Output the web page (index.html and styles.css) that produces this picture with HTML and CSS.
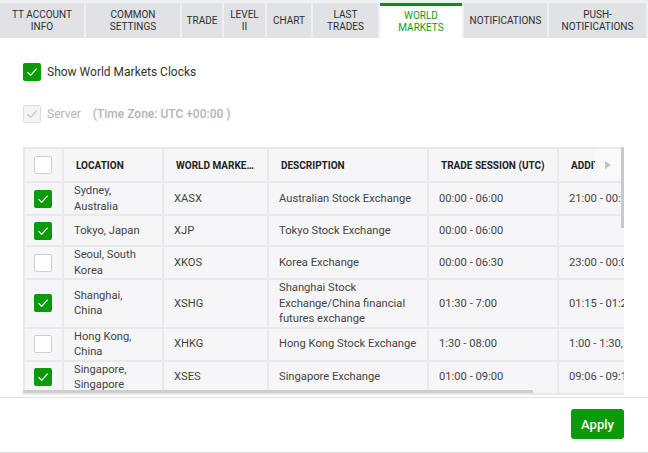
FILE: index.html
```html
<html>
    <head>
        <meta charset="UTF-8">
        <link rel="stylesheet" href="styles.css">
    </head>
    <body>
        <div class="tabs">
            <div class="tab tab-account">TT ACCOUNT<br>INFO</div>
            <div class="tab tab-common">COMMON<br>SETTINGS</div>
            <div class="tab tab-trade">TRADE</div>
            <div class="tab tab-level">LEVEL<br>II</div>
            <div class="tab tab-chart">CHART</div>
            <div class="tab tab-last">LAST<br>TRADES</div>
            <div class="tab tab-world active">WORLD<br>MARKETS</div>
            <div class="tab tab-notif">NOTIFICATIONS</div>
            <div class="tab tab-push">PUSH-<br>NOTIFICATIONS</div>
        </div>

        <div class="content">
            <div class="check-row">
                <span class="box on">
                    <svg width="18" height="18" viewBox="0 0 18 18"><path d="M4.5 9.2 L7.7 12.4 L13.6 5.6" fill="none" stroke="#fff" stroke-width="1.3"/></svg>
                </span>
                Show World Markets Clocks
            </div>

            <div class="check-row disabled">
                <span class="box dim">
                    <svg width="18" height="18" viewBox="0 0 18 18"><path d="M4.5 9.2 L7.7 12.4 L13.6 5.6" fill="none" stroke="#c4c4c4" stroke-width="1.3"/></svg>
                </span>
                Server <span class="tz">(Time Zone: UTC +00:00 )</span>
            </div>

            <div class="grid-wrap">
                <table class="grid">
                    <colgroup>
                        <col class="c-check"><col class="c-loc"><col class="c-mkt"><col class="c-desc"><col class="c-sess"><col class="c-add">
                    </colgroup>
                    <tr>
                        <th><span class="cb"></span></th>
                        <th>LOCATION</th>
                        <th>WORLD MARKET CODE</th>
                        <th>DESCRIPTION</th>
                        <th>TRADE SESSION (UTC)</th>
                        <th>ADDITIONAL SESSIONS</th>
                    </tr>
                    <tr>
                        <td><span class="cb on"><svg width="18" height="18" viewBox="0 0 18 18"><path d="M4.5 9.2 L7.7 12.4 L13.6 5.6" fill="none" stroke="#fff" stroke-width="1.2"/></svg></span></td>
                        <td>Sydney,<br>Australia</td>
                        <td>XASX</td>
                        <td>Australian Stock Exchange</td>
                        <td>00:00 - 06:00</td>
                        <td class="nw">21:00 - 00:30</td>
                    </tr>
                    <tr>
                        <td><span class="cb on"><svg width="18" height="18" viewBox="0 0 18 18"><path d="M4.5 9.2 L7.7 12.4 L13.6 5.6" fill="none" stroke="#fff" stroke-width="1.2"/></svg></span></td>
                        <td>Tokyo, Japan</td>
                        <td>XJP</td>
                        <td>Tokyo Stock Exchange</td>
                        <td>00:00 - 06:00</td>
                        <td class="nw"></td>
                    </tr>
                    <tr>
                        <td><span class="cb"></span></td>
                        <td>Seoul, South<br>Korea</td>
                        <td>XKOS</td>
                        <td>Korea Exchange</td>
                        <td>00:00 - 06:30</td>
                        <td class="nw">23:00 - 00:00</td>
                    </tr>
                    <tr>
                        <td><span class="cb on"><svg width="18" height="18" viewBox="0 0 18 18"><path d="M4.5 9.2 L7.7 12.4 L13.6 5.6" fill="none" stroke="#fff" stroke-width="1.2"/></svg></span></td>
                        <td>Shanghai,<br>China</td>
                        <td>XSHG</td>
                        <td>Shanghai Stock<br>Exchange/China financial<br>futures exchange</td>
                        <td>01:30 - 7:00</td>
                        <td class="nw">01:15 - 01:25</td>
                    </tr>
                    <tr>
                        <td><span class="cb"></span></td>
                        <td>Hong Kong,<br>China</td>
                        <td>XHKG</td>
                        <td>Hong Kong Stock Exchange</td>
                        <td>1:30 - 08:00</td>
                        <td class="nw">1:00 - 1:30, 8:00 - 8:10</td>
                    </tr>
                    <tr>
                        <td><span class="cb on"><svg width="18" height="18" viewBox="0 0 18 18"><path d="M4.5 9.2 L7.7 12.4 L13.6 5.6" fill="none" stroke="#fff" stroke-width="1.2"/></svg></span></td>
                        <td>Singapore,<br>Singapore</td>
                        <td>XSES</td>
                        <td>Singapore Exchange</td>
                        <td>01:00 - 09:00</td>
                        <td class="nw">09:06 - 09:16</td>
                    </tr>
                </table>

                <!-- scroll affordances sit on top of the grid -->
                <div class="scroll-right"><span class="arrow"></span></div>
                <div class="vbar"></div>
                <div class="hbar"></div>
            </div>
        </div>

        <div class="footer">
            <button class="apply">Apply</button>
        </div>
    </body>
</html>
```

FILE: styles.css
```css
html, body {
    margin: 0px;
    font-family: Roboto, "Liberation Sans", sans-serif;
    background: white;
    color: #333;
}

/* tab strip */
.tabs {
    display: flex;
    gap: 2px;
    padding-top: 3px;
    background: #eef0f2;
    height: 35px;
}
.tab {
    background: #e1e2e5;
    font-size: 10px;
    line-height: 12px;
    color: #2e2e2e;
    text-align: center;
    display: flex;
    align-items: center;
    justify-content: center;
    flex: none;
}
.tab.active {
    background: white;
    color: #149a14;
    border-top: 3px solid #079107;
}
.tab-account { width: 84px; }
.tab-common  { width: 94px; }
.tab-trade   { width: 40px; }
.tab-level   { width: 41px; }
.tab-chart   { width: 44px; }
.tab-last    { width: 65px; }
.tab-world   { width: 82px; }
.tab-notif   { width: 83px; }
.tab-push    { width: 97px; }

/* options */
.content {
    padding: 25px 0px 0px 23px;
}
.check-row {
    display: flex;
    align-items: center;
    gap: 6px;
    font-size: 12px;
    color: #333;
    height: 18px;
    margin-bottom: 24px;
}
.check-row.disabled {
    color: #b4b4b4;
}
.tz {
    margin-left: 6px;
    font-weight: 500;
}
.box {
    width: 18px;
    height: 18px;
    border-radius: 2px;
    display: block;
}
.box svg, .cb svg {
    display: block;
}
.box.on {
    background: #0a9a0a;
}
.box.dim {
    box-sizing: border-box;
    border: 1px solid #dedede;
    background: #f4f4f4;
}
.box.dim svg {
    margin: -1px;
}

/* grid */
.grid-wrap {
    position: relative;
    width: 601px;
    height: 250px;
    overflow: hidden;
}
.grid {
    table-layout: fixed;
    width: 680px;
    border-collapse: separate;
    border-spacing: 2px;
    background: #e9e9ec;
}
.c-check { width: 37px; }
.c-loc   { width: 98px; }
.c-mkt   { width: 103px; }
.c-desc  { width: 158px; }
.c-sess  { width: 128px; }
.c-add   { width: 142px; }

.grid th, .grid td {
    background: #f6f6f8;
    padding: 0px 8px 0px 10px;
    text-align: left;
    vertical-align: middle;
}
.grid th {
    height: 32px;
    padding-left: 12px;
    font-size: 10px;
    font-weight: bold;
    color: #222;
    white-space: nowrap;
    overflow: hidden;
    text-overflow: ellipsis;
}
.grid td {
    height: 29px;
    font-size: 11.2px;
    line-height: 15.5px;
    color: #444;
}
.grid th:first-child, .grid td:first-child {
    padding: 0px 0px 0px 9px;
}
.grid td.nw {
    white-space: nowrap;
    overflow: hidden;
}
.cb {
    display: block;
    box-sizing: border-box;
    width: 18px;
    height: 18px;
    border: 1px solid #cfcfd2;
    border-radius: 2px;
    background: white;
}
.cb.on {
    border: none;
    background: #0a9a0a;
}

.scroll-right {
    position: absolute;
    left: 572px;
    top: 2px;
    width: 26px;
    height: 32px;
    background: #f9f9fa;
    display: flex;
    align-items: center;
    justify-content: center;
}
.arrow {
    width: 0px;
    height: 0px;
    border-top: 4px solid transparent;
    border-bottom: 4px solid transparent;
    border-left: 6px solid #c2c2c4;
}
.vbar {
    position: absolute;
    left: 598px;
    top: 0px;
    width: 3px;
    height: 81px;
    background: #c9c9cb;
}
.hbar {
    position: absolute;
    left: 0px;
    top: 243px;
    width: 510px;
    height: 3px;
    background: #cdcdcf;
}

/* footer */
.footer {
    border-top: 1px solid #e3e3e5;
    border-bottom: 1px solid #dcdcde;
    height: 54px;
    display: flex;
    align-items: center;
    justify-content: flex-end;
    padding-right: 24px;
}
.apply {
    background: #0a9a0a;
    color: white;
    border: none;
    border-radius: 3px;
    width: 53px;
    height: 30px;
    font-family: Roboto, "Liberation Sans", sans-serif;
    font-size: 13px;
    font-weight: 500;
    margin-top: -2px;
}
```
